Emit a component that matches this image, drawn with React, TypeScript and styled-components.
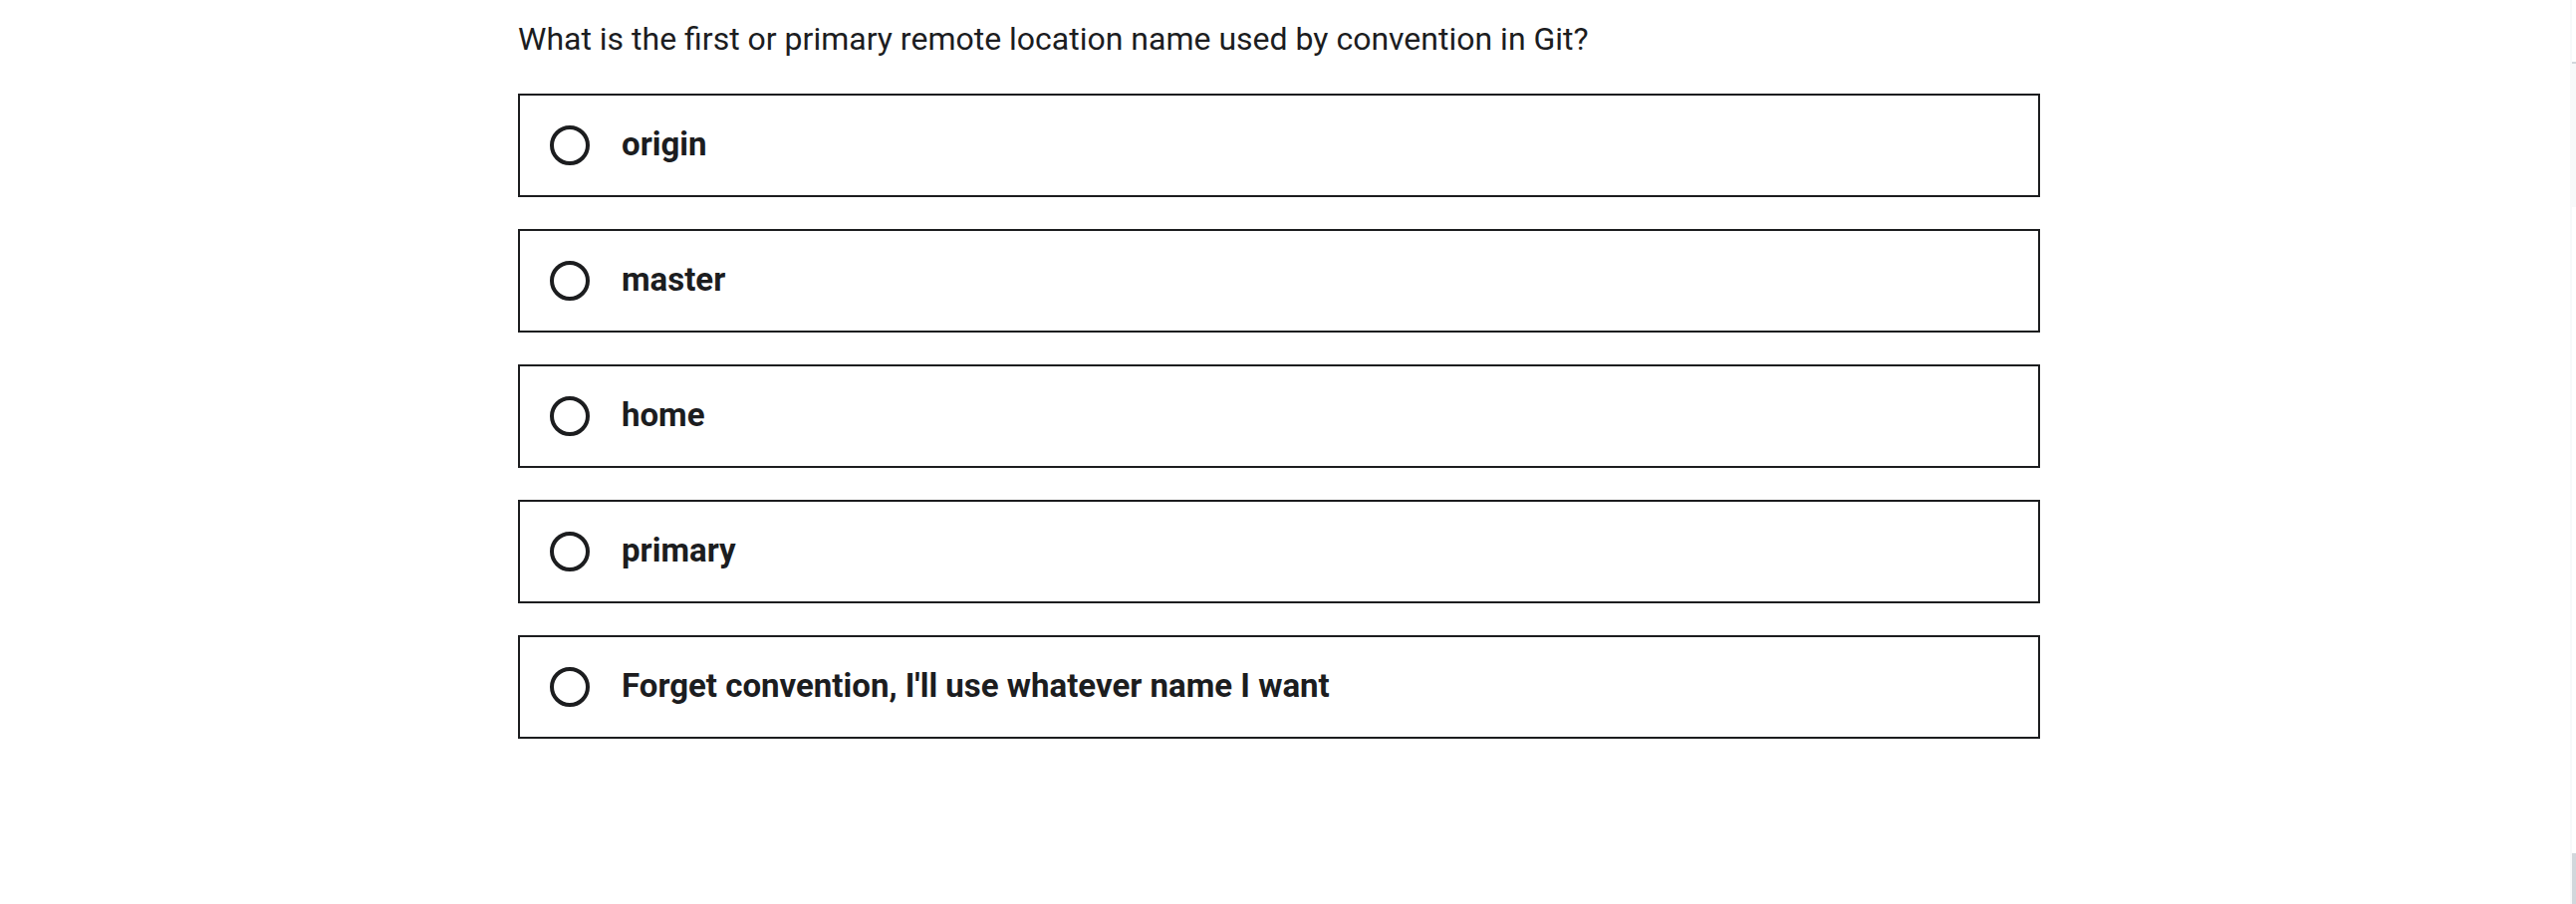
import React, { useState } from "react";
import styled, { createGlobalStyle } from "styled-components";

const ink = "#1c1d1f";
const mist = "#f7f9fa";
const line = "#d1d7dc";

const GlobalStyle = createGlobalStyle`
  *, *::before, *::after {
    box-sizing: border-box;
  }
  body {
    margin: 0;
    background: #fff;
    color: ${ink};
    font-family: Roboto, "Liberation Sans", sans-serif;
  }
`;

const Page = styled.div`
  display: flex;
  min-height: 100vh;
`;

const Main = styled.main`
  flex: 1;
  min-width: 0;
  padding: 16px 12px 32px 0;
`;

const Quiz = styled.fieldset`
  width: 100%;
  max-width: 1528px;
  min-width: 0;
  margin: 0 auto;
  padding: 0;
  border: 0;
`;

const Question = styled.legend`
  margin-bottom: 32px;
  padding: 0;
  font-size: 32px;
  line-height: 46px;
`;

const Options = styled.ul`
  display: flex;
  flex-direction: column;
  gap: 32px;
  margin: 0;
  padding: 0;
  list-style: none;
`;

const Option = styled.label`
  display: flex;
  align-items: center;
  gap: 32px;
  padding: 30px;
  border: 2px solid ${ink};
  cursor: pointer;

  &:hover {
    background: ${mist};
  }
`;

const Radio = styled.input`
  flex: none;
  appearance: none;
  width: 40px;
  height: 40px;
  margin: 0;
  border: 4px solid ${ink};
  border-radius: 50%;
  cursor: pointer;

  &:checked {
    background: radial-gradient(${ink} 10px, transparent 11px);
  }
`;

const OptionText = styled.span`
  padding-bottom: 2px;
  font-size: 33px;
  font-weight: 700;
  line-height: 38px;
`;

const Sidebar = styled.aside`
  display: flex;
  flex: none;
  flex-direction: column;
  width: 6px;
  border-left: 2px solid ${mist};
`;

const SidebarHeader = styled.div`
  height: 64px;
  border-bottom: 2px solid ${line};
`;

const SidebarSection = styled.div`
  height: 144px;
  background: ${mist};
`;

const SidebarFooter = styled.div`
  height: 51px;
  margin-top: auto;
  background: ${line};
`;

const answers = [
  "origin",
  "master",
  "home",
  "primary",
  "Forget convention, I'll use whatever name I want",
];

export default function App() {
  const [selected, setSelected] = useState<number | null>(null);

  return (
    <>
      <GlobalStyle />
      <Page>
        <Main>
          <Quiz>
            <Question>
              What is the first or primary remote location name used by convention in Git?
            </Question>
            <Options>
              {answers.map((answer, index) => (
                <li key={answer}>
                  <Option htmlFor={`answer-${index}`}>
                    <Radio
                      type="radio"
                      id={`answer-${index}`}
                      name="answer"
                      checked={selected === index}
                      onChange={() => setSelected(index)}
                    />
                    <OptionText>{answer}</OptionText>
                  </Option>
                </li>
              ))}
            </Options>
          </Quiz>
        </Main>
        <Sidebar>
          <SidebarHeader />
          <SidebarSection />
          <SidebarFooter />
        </Sidebar>
      </Page>
    </>
  );
}
